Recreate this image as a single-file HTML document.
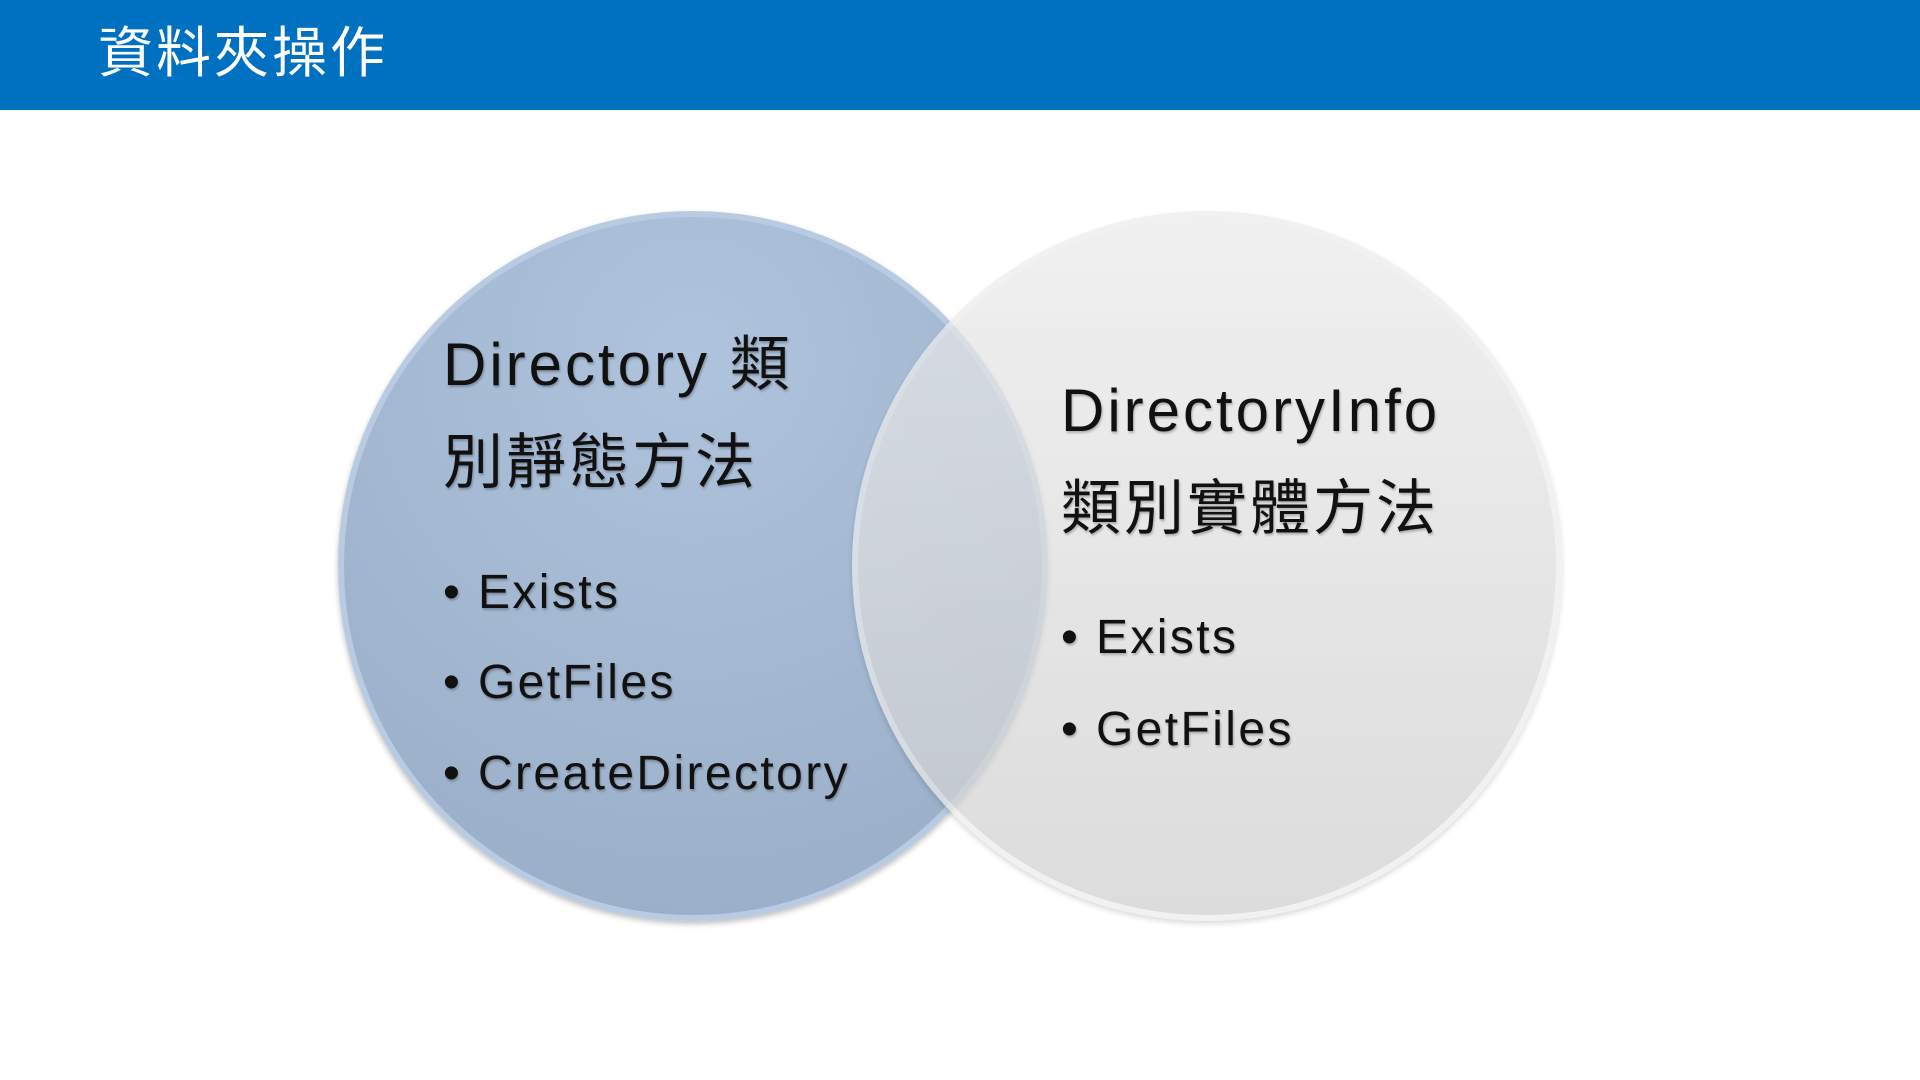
<!DOCTYPE html>
<html><head><meta charset="utf-8"><style>
html,body{margin:0;padding:0;width:1920px;height:1080px;overflow:hidden;background:#fff;font-family:"Liberation Sans","Noto Sans CJK TC",sans-serif;}
.hdr{position:absolute;left:0;top:0;width:1920px;height:110px;background:#0070C0;}
.hdr span{position:absolute;left:98px;top:18px;font-size:55px;color:#fff;line-height:70px;letter-spacing:3px;}
.c{position:absolute;width:710px;height:710px;border-radius:50%;top:211px;box-sizing:border-box;}
.l{left:338px;background:radial-gradient(circle at 50% 20%,#afc3dd,#9aaec8 90%);border:6px solid #b8cbe2;box-shadow:0 3px 6px rgba(0,0,0,.25);}
.r{left:852px;background:linear-gradient(#ebebeb,#cfcfcf);opacity:.72;border:6px solid #ececec;box-shadow:0 3px 6px rgba(0,0,0,.2);}
.t{position:absolute;color:#111;text-shadow:1px 2px 2px rgba(0,0,0,.25);white-space:nowrap;}
.h{font-size:60px;line-height:98px;letter-spacing:3px;}
.b{font-size:48px;line-height:60px;letter-spacing:2.4px;}
</style></head><body>
<div class="hdr"><span>資料夾操作</span></div>
<div class="c l"></div>
<div class="c r"></div>
<div class="t h" style="left:443px;top:316px">Directory 類<br>別靜態方法</div>
<div class="t b" style="left:443px;top:563px">• Exists</div>
<div class="t b" style="left:443px;top:653px">• GetFiles</div>
<div class="t b" style="left:443px;top:744px">• CreateDirectory</div>
<div class="t h" style="left:1061px;top:362px">DirectoryInfo<br>類別實體方法</div>
<div class="t b" style="left:1061px;top:608px">• Exists</div>
<div class="t b" style="left:1061px;top:700px">• GetFiles</div>
</body></html>
